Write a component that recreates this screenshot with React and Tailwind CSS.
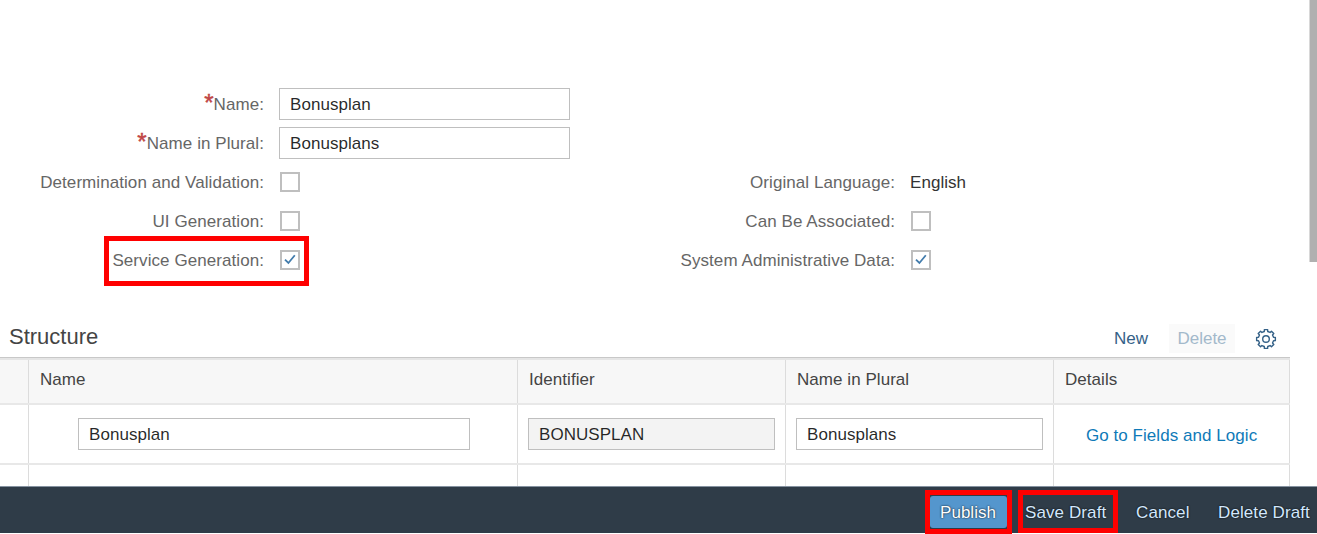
import React from "react";

function Label({ required, className, children }) {
  return (
    <div className={`relative shrink-0 text-right tracking-[0.07px] text-[#666] ${required ? "-top-px" : "top-px"} ${className}`}>
      {required && <span className="relative top-[1px] text-[24px] leading-[20px] text-[#c14646] [-webkit-text-stroke:0.5px_#c14646]">*</span>}
      {children}:
    </div>
  );
}

function CheckBox({ checked }) {
  return (
    <span className="flex size-5 shrink-0 items-center justify-center border-2 border-[#bfbfbf] bg-white">
      {checked && (
        <svg width="16" height="16" viewBox="0 0 16 16" fill="none" stroke="#427cac" strokeWidth="1.8">
          <path d="M3 7.6 L6.4 11 L12.8 3.2" />
        </svg>
      )}
    </span>
  );
}

function Field({ value, className }) {
  return (
    <div className={`flex h-8 items-center border border-[#bfbfbf] pl-[10px] pt-[2px] tracking-[0.05px] text-black/85 ${className}`}>
      {value}
    </div>
  );
}

function Highlight({ className }) {
  return <div className={`pointer-events-none absolute border-[5px] border-[#ff0000] ${className}`} />;
}

const toothAngles = [0, 45, 90, 135, 180, 225, 270, 315];

function Gear() {
  const points = toothAngles.flatMap((angle) =>
    [[-13, 7.7], [-10, 9.5], [10, 9.5], [13, 7.7]].map(([offset, radius]) => {
      const a = ((angle + offset) * Math.PI) / 180;
      return `${(11 + radius * Math.cos(a)).toFixed(2)},${(11 + radius * Math.sin(a)).toFixed(2)}`;
    })
  );
  return (
    <svg width="22" height="22" viewBox="0 0 22 22" fill="none" stroke="#346187" strokeWidth="1.4" strokeLinejoin="round">
      <polygon points={points.join(" ")} />
      <circle cx="11" cy="11" r="3.3" />
    </svg>
  );
}

const columns = "grid grid-cols-[29px_489px_268px_268px_236px]";
const cell = "border-r border-[#dcdcdc]";

export default function App() {
  return (
    <div className="relative flex h-[534px] w-[1317px] flex-col overflow-hidden bg-white font-['Liberation_Sans',Arial,sans-serif] text-[17px] leading-5">
      <div className="flex h-[322px] justify-between">
        <div className="flex pt-[88px]">
          <div className="flex w-[640px] flex-col gap-[7px]">
            <div className="flex h-8 items-center gap-[15px]">
              <Label required className="w-[264px]">Name</Label>
              <Field value="Bonusplan" className="w-[291px]" />
            </div>
            <div className="flex h-8 items-center gap-[15px]">
              <Label required className="w-[264px]">Name in Plural</Label>
              <Field value="Bonusplans" className="w-[291px]" />
            </div>
            <div className="flex h-8 items-center gap-4">
              <Label className="w-[264px]">Determination and Validation</Label>
              <CheckBox />
            </div>
            <div className="flex h-8 items-center gap-4">
              <Label className="w-[264px]">UI Generation</Label>
              <CheckBox />
            </div>
            <div className="flex h-8 items-center gap-4">
              <Label className="w-[264px]">Service Generation</Label>
              <CheckBox checked />
            </div>
          </div>
          <div className="flex flex-col gap-[7px] pt-[78px]">
            <div className="flex h-8 items-center gap-[15px]">
              <Label className="w-[255px]">Original Language</Label>
              <span className="pt-[2px] tracking-[0.05px] text-[#333]">English</span>
            </div>
            <div className="flex h-8 items-center gap-4">
              <Label className="w-[255px]">Can Be Associated</Label>
              <CheckBox />
            </div>
            <div className="flex h-8 items-center gap-4">
              <Label className="w-[255px]">System Administrative Data</Label>
              <CheckBox checked />
            </div>
          </div>
        </div>
        <div className="h-[262px] w-2 border-l border-[#d8d8d8] bg-[#b0b0b0]" />
      </div>

      <div className="flex h-[35px] w-[1290px] items-start justify-between pl-[9px] pr-[13px]">
        <h2 className="pt-[3px] text-[22px] leading-6 text-[#444]">Structure</h2>
        <div className="flex items-center pt-[2px] text-[#346187]">
          <span>New</span>
          <span className="ml-[21px] flex h-[29px] w-[66px] items-center justify-center bg-[#fafafa] text-[#a3b9cb]">Delete</span>
          <span className="ml-5 flex"><Gear /></span>
        </div>
      </div>

      <div className="flex h-[129px] w-[1290px] flex-col overflow-hidden">
        <div className="h-[3px] shrink-0 border-t border-[#c8c8c8] bg-[#e5e5e5]" />
        <div className={`h-[43px] shrink-0 bg-[#f7f7f7] tracking-[0.05px] text-[#444] ${columns}`}>
          <div className={cell} />
          <div className={`pl-[11px] pt-[10px] ${cell}`}>Name</div>
          <div className={`pl-[11px] pt-[10px] ${cell}`}>Identifier</div>
          <div className={`pl-[11px] pt-[10px] ${cell}`}>Name in Plural</div>
          <div className={`pl-[11px] pt-[10px] ${cell}`}>Details</div>
        </div>
        <div className={`h-[62px] shrink-0 border-y-2 border-[#e8e8e8] ${columns}`}>
          <div className={cell} />
          <div className={`pl-[49px] pt-[13px] ${cell}`}><Field value="Bonusplan" className="w-[392px]" /></div>
          <div className={`pl-[10px] pt-[13px] ${cell}`}><Field value="BONUSPLAN" className="w-[247px] bg-[#f3f3f3]" /></div>
          <div className={`pl-[10px] pt-[13px] ${cell}`}><Field value="Bonusplans" className="w-[247px]" /></div>
          <div className={`pl-8 pt-[21px] tracking-[0.05px] text-[#0f7ab8] ${cell}`}>Go to Fields and Logic</div>
        </div>
        <div className={`grow ${columns}`}>
          <div className={cell} />
          <div className={cell} />
          <div className={cell} />
          <div className={cell} />
          <div className={cell} />
        </div>
      </div>

      <div className="flex h-[47px] items-center justify-end border-t border-[#8592a0] bg-[#2f3c48] pr-[7px] pt-[4px] text-[#d3e8fd] [text-shadow:0_0_2px_#000]">
        <span className="flex h-8 w-[77px] items-center justify-center rounded-[3px] bg-[#5496cd] pr-px pt-[2px] text-white">Publish</span>
        <span className="ml-[18px] w-[82px] pt-[2px] tracking-[0.1px]">Save Draft</span>
        <span className="ml-[29px] w-[54px] pt-[2px] tracking-[0.1px]">Cancel</span>
        <span className="ml-[28px] w-[92px] whitespace-nowrap pt-[2px] tracking-[0.1px]">Delete Draft</span>
      </div>

      <Highlight className="left-[104px] top-[236px] h-[50px] w-[205px]" />
      <Highlight className="left-[925px] top-[490px] h-[44px] w-[87px]" />
      <Highlight className="left-[1018px] top-[490px] h-[43px] w-[100px]" />
    </div>
  );
}
